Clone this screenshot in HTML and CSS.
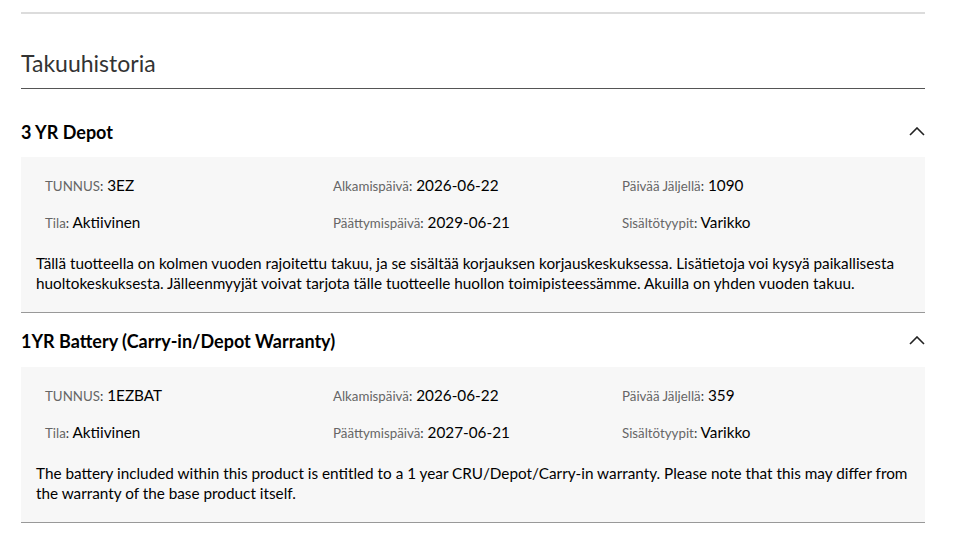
FILE: index.html
```html
<!DOCTYPE html>
<html lang="fi">
<head>
<meta charset="utf-8">
<title>Takuuhistoria</title>
<link rel="stylesheet" href="styles.css">
</head>
<body>
<div class="page">
  <div class="topline"></div>
  <h2 class="title">Takuuhistoria</h2>

  <section class="warranty">
    <div class="w-head w-head-first">
      <h3 class="w-name">3 YR Depot</h3>
      <svg class="chevron" width="16" height="9" viewBox="0 0 16 9"><polyline points="1,8 8,1 15,8" fill="none" stroke="#222" stroke-width="1.6"/></svg>
    </div>
    <div class="w-body">
      <div class="grid">
        <div class="item"><span class="lbl">TUNNUS</span><span class="colon">:</span> <span class="val">3EZ</span></div>
        <div class="item"><span class="lbl">Alkamispäivä</span><span class="colon">:</span> <span class="val">2026-06-22</span></div>
        <div class="item"><span class="lbl">Päivää Jäljellä</span><span class="colon">:</span> <span class="val">1090</span></div>
        <div class="item"><span class="lbl">Tila</span><span class="colon">:</span> <span class="val">Aktiivinen</span></div>
        <div class="item"><span class="lbl">Päättymispäivä</span><span class="colon">:</span> <span class="val">2029-06-21</span></div>
        <div class="item"><span class="lbl">Sisältötyypit</span><span class="colon">:</span> <span class="val">Varikko</span></div>
      </div>
      <p class="desc">Tällä tuotteella on kolmen vuoden rajoitettu takuu, ja se sisältää korjauksen korjauskeskuksessa. Lisätietoja voi kysyä paikallisesta huoltokeskuksesta. Jälleenmyyjät voivat tarjota tälle tuotteelle huollon toimipisteessämme. Akuilla on yhden vuoden takuu.</p>
    </div>
  </section>

  <section class="warranty">
    <div class="w-head">
      <h3 class="w-name">1YR Battery (Carry-in/Depot Warranty)</h3>
      <svg class="chevron" width="16" height="9" viewBox="0 0 16 9"><polyline points="1,8 8,1 15,8" fill="none" stroke="#222" stroke-width="1.6"/></svg>
    </div>
    <div class="w-body">
      <div class="grid">
        <div class="item"><span class="lbl">TUNNUS</span><span class="colon">:</span> <span class="val">1EZBAT</span></div>
        <div class="item"><span class="lbl">Alkamispäivä</span><span class="colon">:</span> <span class="val">2026-06-22</span></div>
        <div class="item"><span class="lbl">Päivää Jäljellä</span><span class="colon">:</span> <span class="val">359</span></div>
        <div class="item"><span class="lbl">Tila</span><span class="colon">:</span> <span class="val">Aktiivinen</span></div>
        <div class="item"><span class="lbl">Päättymispäivä</span><span class="colon">:</span> <span class="val">2027-06-21</span></div>
        <div class="item"><span class="lbl">Sisältötyypit</span><span class="colon">:</span> <span class="val">Varikko</span></div>
      </div>
      <p class="desc">The battery included within this product is entitled to a 1 year CRU/Depot/Carry-in warranty. Please note that this may differ from the warranty of the base product itself.</p>
    </div>
  </section>
</div>
</body>
</html>
```

FILE: styles.css
```css
html, body {
  margin: 0;
  padding: 0;
  background: #ffffff;
}

body {
  font-family: Lato, "Open Sans", "Liberation Sans", sans-serif;
  color: #000;
}

.page {
  width: 904px;
  margin-left: 21px;
  padding-top: 12px;
}

.topline {
  border-top: 2px solid #dcdcdc;
}

.title {
  margin: 34px 0 0;
  padding-bottom: 10px;
  font-size: 23px;
  line-height: 30px;
  font-weight: 400;
  color: #333;
  border-bottom: 1px solid #555;
}

.w-head {
  display: flex;
  align-items: center;
  justify-content: space-between;
  padding: 17px 0 15px;
}

.w-head-first {
  padding: 32px 0 14px;
}

.w-name {
  margin: 0;
  font-size: 18px;
  line-height: 22px;
  font-weight: 700;
  color: #000;
}

.chevron {
  display: block;
  margin-top: -2px;
}

.w-body {
  background: #f7f7f7;
  border-bottom: 1px solid #999;
  padding: 18px 15px 19px;
}

.grid {
  display: grid;
  grid-template-columns: 288px 289px 1fr;
  row-gap: 16px;
  padding-left: 9px;
}

.item {
  font-size: 15.3px;
  line-height: 20px;
  white-space: nowrap;
}

.lbl {
  font-size: 13.3px;
  color: #666;
}

.colon {
  font-size: 13.3px;
  color: #333;
}

.val {
  color: #000;
}

.desc {
  margin: 20px 0 0;
  font-size: 15.3px;
  line-height: 20px;
  color: #000;
}
```
